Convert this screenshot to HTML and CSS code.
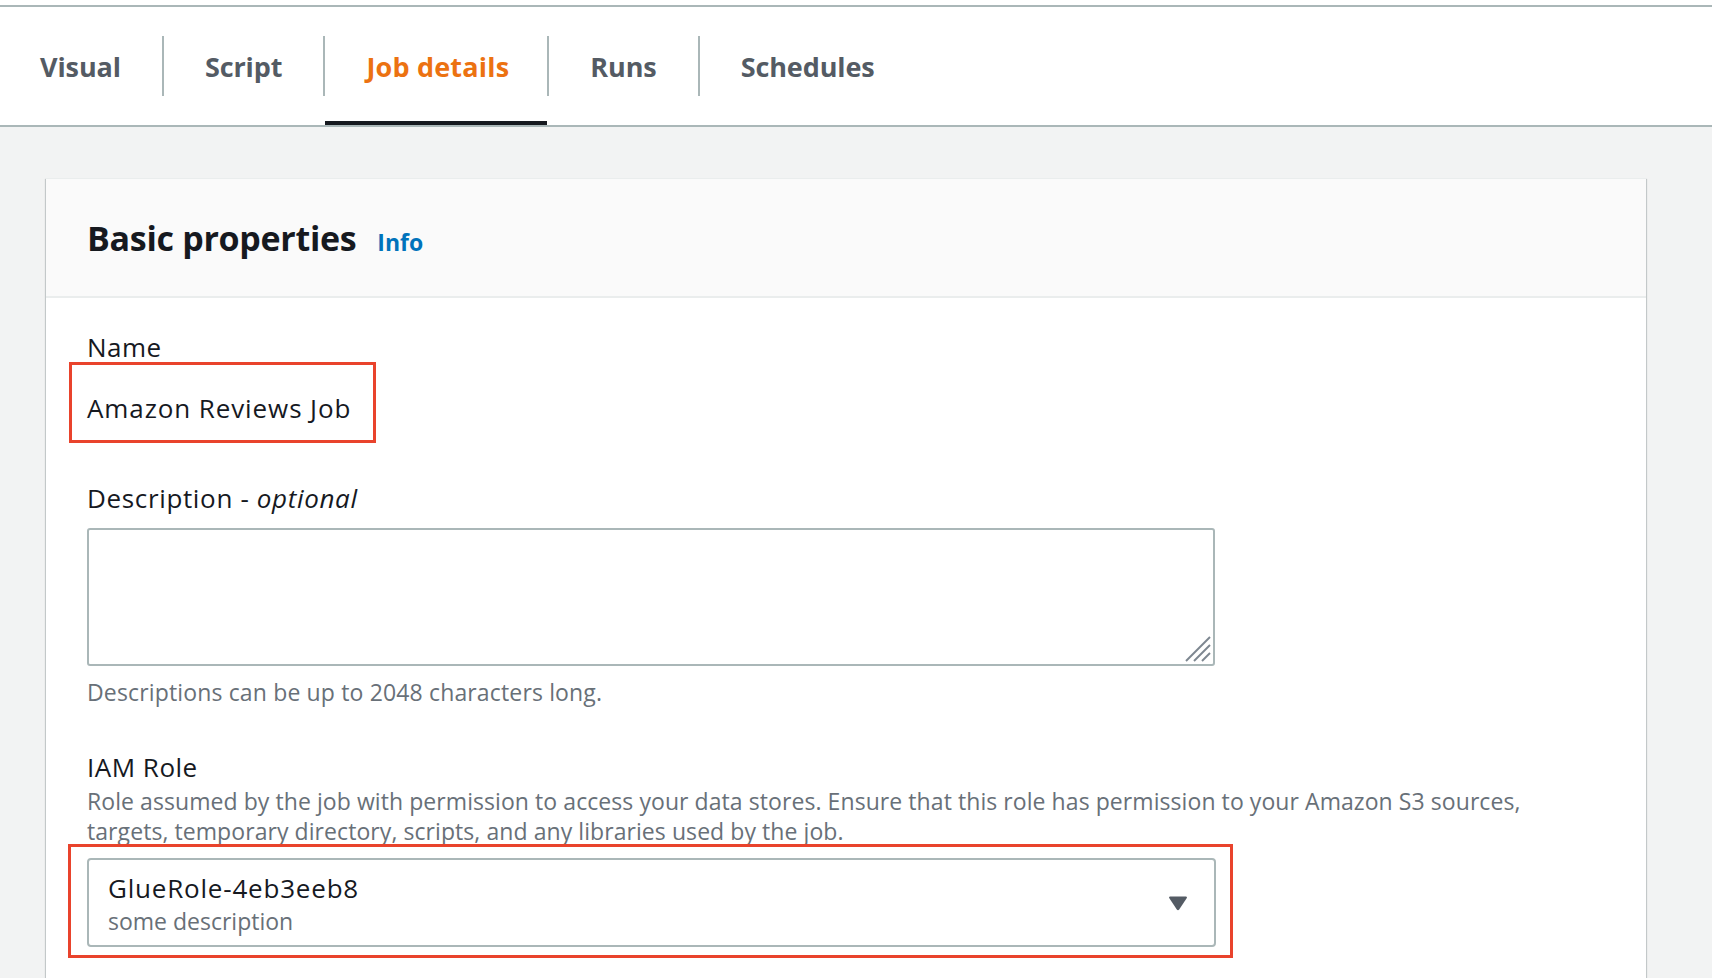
FILE: index.html
```html
<!DOCTYPE html>
<html lang="en">
<head>
<meta charset="utf-8">
<title>Job details</title>
<link rel="stylesheet" href="styles.css">
</head>
<body>
<div class="topline"></div>
<nav class="tabs">
  <div class="tab">Visual</div>
  <span class="sep"></span>
  <div class="tab">Script</div>
  <span class="sep"></span>
  <div class="tab active">Job details</div>
  <span class="sep"></span>
  <div class="tab">Runs</div>
  <span class="sep"></span>
  <div class="tab">Schedules</div>
</nav>
<main class="page">
  <section class="card">
    <header class="card-header">
      <h2 class="title">Basic properties</h2>
      <a class="info">Info</a>
    </header>
    <div class="card-body">
      <div class="label">Name</div>
      <div class="name-box">Amazon Reviews Job</div>

      <div class="label desc-label">Description - <em>optional</em></div>
      <div class="textarea-wrap">
        <textarea class="textarea"></textarea>
        <svg class="grip" width="28" height="28" viewBox="0 0 28 28">
          <line x1="2" y1="26" x2="26" y2="2" />
          <line x1="10" y1="26" x2="26" y2="10" />
          <line x1="18" y1="26" x2="26" y2="18" />
        </svg>
      </div>
      <div class="hint">Descriptions can be up to 2048 characters long.</div>

      <div class="label role-label">IAM Role</div>
      <div class="role-desc">Role assumed by the job with permission to access your data stores. Ensure that this role has permission to your Amazon S3 sources, targets, temporary directory, scripts, and any libraries used by the job.</div>
      <div class="select-frame">
        <div class="select">
          <div class="select-text">
            <div class="select-value">GlueRole-4eb3eeb8</div>
            <div class="select-sub">some description</div>
          </div>
          <svg class="caret" width="20" height="16" viewBox="0 0 20 16">
            <path d="M2 1.5 H18 Q19.5 1.5 18.8 3 L11.2 14.5 Q10 16 8.8 14.5 L1.2 3 Q0.5 1.5 2 1.5 Z" />
          </svg>
        </div>
      </div>
    </div>
  </section>
</main>
</body>
</html>
```
FILE: styles.css
```css
* { box-sizing: border-box; }
html, body {
  margin: 0;
  padding: 0;
  height: 100%;
  overflow: hidden;
}
body {
  font-family: "Open Sans", "Noto Sans", sans-serif;
  color: #16191f;
  background: #f2f3f3;
}
.topline {
  height: 7px;
  background: #ffffff;
  border-bottom: 2px solid #aab7b8;
}
.tabs {
  display: flex;
  align-items: center;
  height: 120px;
  background: #ffffff;
  border-bottom: 2px solid #aab7b8;
  padding-left: 0;
}
.tab {
  height: 118px;
  display: flex;
  align-items: center;
  padding: 4px 41px 0;
  font-size: 27px;
  font-weight: 700;
  letter-spacing: -0.1px;
  color: #545b64;
  border-bottom: 4px solid transparent;
}
.tab:first-child { padding-left: 40px; }
.tab.active {
  color: #ec7211;
  border-bottom-color: #16191f;
  letter-spacing: 0.2px;
  padding-right: 38px;
}
.sep {
  width: 2px;
  height: 60px;
  background: #aab7b8;
  flex: none;
}
.page {
  padding: 51px 66px 0 46px;
}
.card {
  background: #ffffff;
  border-top: 1px solid #eaeded;
  box-shadow: 0 1px 1px 0 rgba(0, 28, 36, 0.3), 1px 1px 1px 0 rgba(0, 28, 36, 0.15), -1px 1px 1px 0 rgba(0, 28, 36, 0.15);
  min-height: 900px;
}
.card-header {
  height: 119px;
  display: flex;
  align-items: center;
  gap: 21px;
  padding-left: 41px;
  background: #fafafa;
  border-bottom: 2px solid #eaeded;
}
.title {
  margin: 0;
  font-size: 34px;
  line-height: 40px;
  font-weight: 700;
  letter-spacing: -0.3px;
  color: #16191f;
}
.info {
  font-size: 23px;
  font-weight: 700;
  color: #0073bb;
  margin-top: 8px;
}
.card-body {
  padding: 34px 41px 0 41px;
}
.label {
  font-size: 26px;
  line-height: 30px;
  letter-spacing: 0.5px;
  color: #16191f;
}
.label em { font-style: italic; }
.desc-label { margin-top: 40px; letter-spacing: 0.65px; }
.name-box {
  display: inline-block;
  margin-left: -18px;
  border: 3px solid #e9432c;
  padding: 28px 22px 17px 15px;
  font-size: 26px;
  line-height: 30px;
  letter-spacing: 0.9px;
}
.textarea-wrap {
  position: relative;
  margin-top: 15px;
  width: 1128px;
  height: 138px;
}
.textarea {
  display: block;
  width: 100%;
  height: 100%;
  border: 2px solid #aab7b8;
  border-radius: 3px;
  resize: none;
  background: #ffffff;
  margin: 0;
}
.grip {
  position: absolute;
  right: 3px;
  bottom: 3px;
  stroke: #7d8690;
  stroke-width: 2;
}
.hint {
  margin-top: 12px;
  font-size: 23px;
  line-height: 28px;
  letter-spacing: 0.15px;
  color: #687078;
}
.role-label { margin-top: 46px; }
.role-desc {
  margin-top: 4px;
  max-width: 1470px;
  font-size: 23px;
  line-height: 30px;
  letter-spacing: 0.07px;
  color: #687078;
}
.select-frame {
  display: inline-block;
  margin-top: -2px;
  margin-left: -19px;
  border: 3px solid #e9432c;
  padding: 11px 14px 8px 16px;
}
.select {
  width: 1129px;
  height: 89px;
  border: 2px solid #aab7b8;
  border-radius: 4px;
  display: flex;
  align-items: center;
  justify-content: space-between;
  padding: 4px 26px 0 19px;
}
.select-value {
  font-size: 26px;
  line-height: 30px;
  letter-spacing: 0.8px;
  color: #16191f;
}
.select-sub {
  margin-top: 3px;
  font-size: 23px;
  line-height: 30px;
  color: #687078;
}
.caret {
  fill: #545b64;
  flex: none;
  margin-top: -4px;
}
```
